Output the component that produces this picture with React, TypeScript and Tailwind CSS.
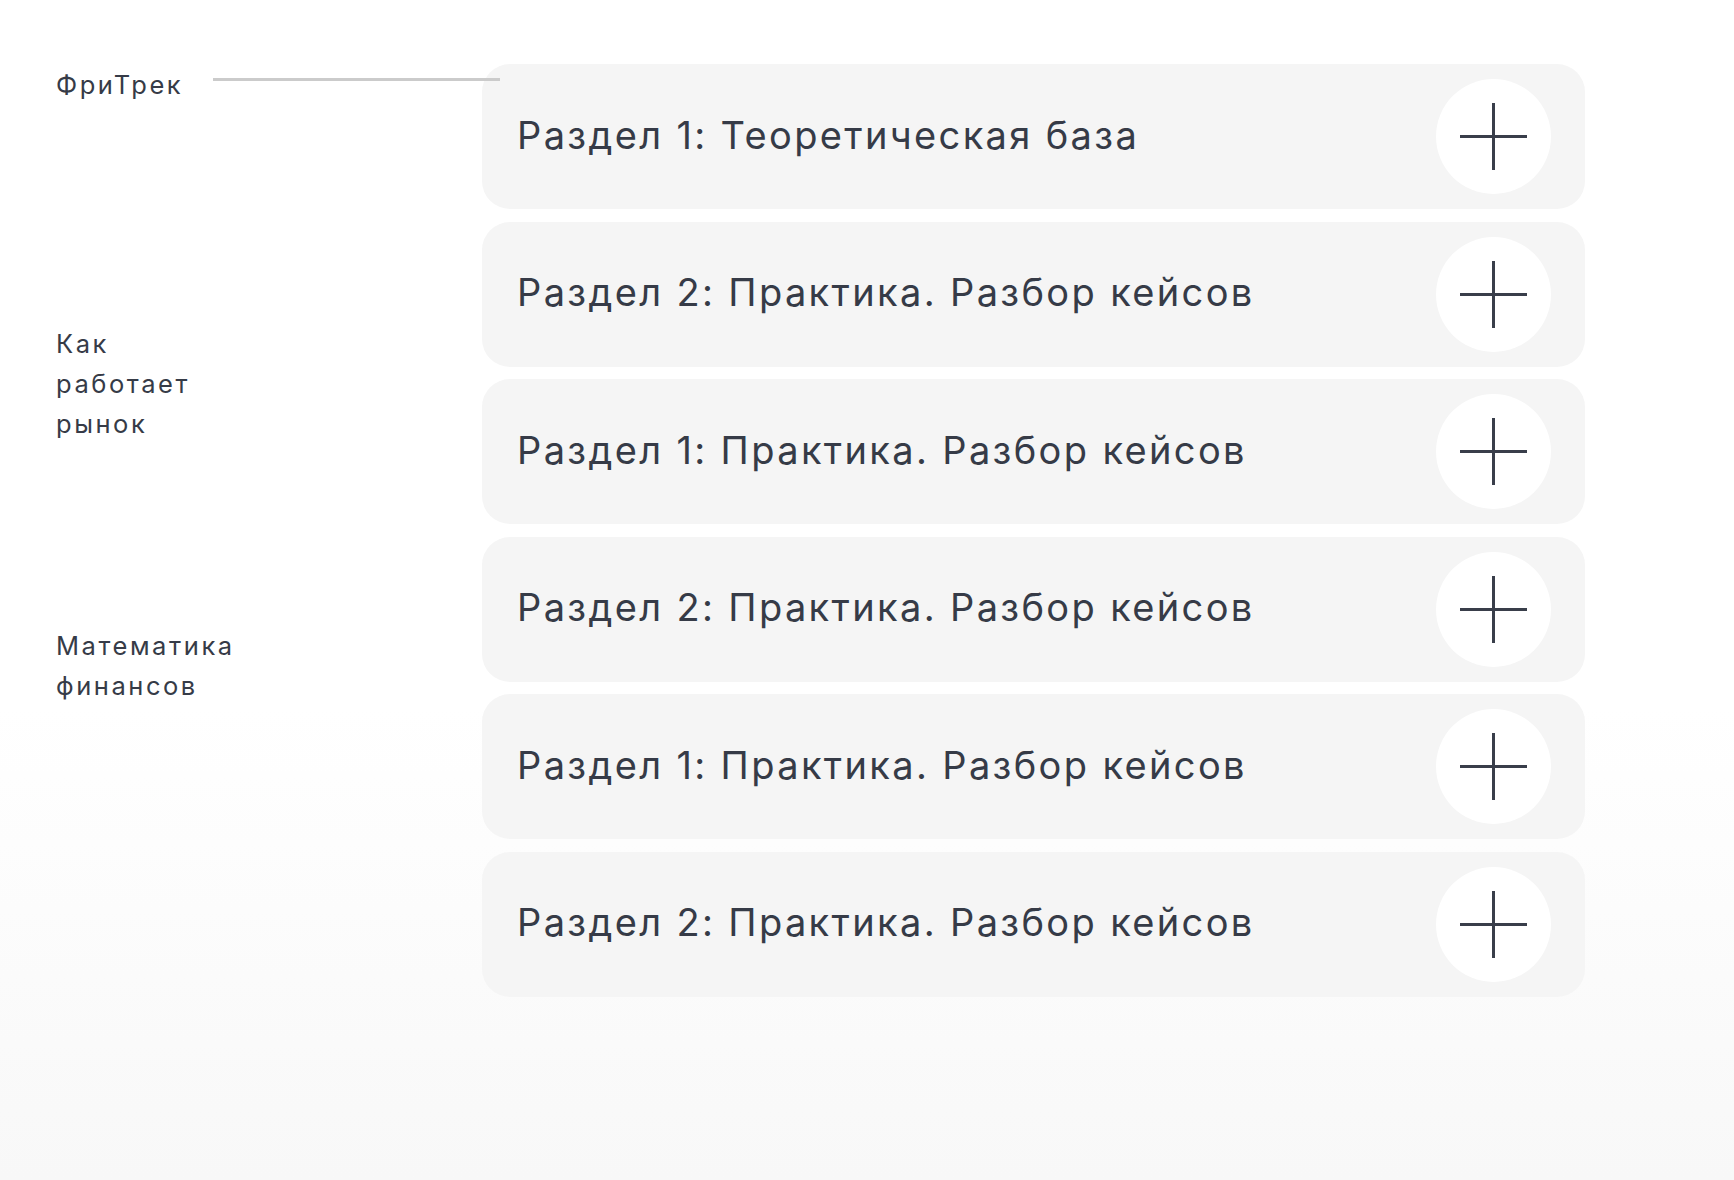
import React from "react";

const items = [
  "Раздел 1: Теоретическая база",
  "Раздел 2: Практика. Разбор кейсов",
  "Раздел 1: Практика. Разбор кейсов",
  "Раздел 2: Практика. Разбор кейсов",
  "Раздел 1: Практика. Разбор кейсов",
  "Раздел 2: Практика. Разбор кейсов",
];

function Plus() {
  return (
    <svg width="67" height="67" viewBox="0 0 67 67" fill="none">
      <path d="M33.5 0V67M0 33.5H67" stroke="#393e4a" strokeWidth="3" />
    </svg>
  );
}

export default function App() {
  return (
    <div
      className="w-full min-h-[1180px] flex bg-gradient-to-b from-white via-white via-60% to-[#f8f8f8] text-[#363b47]"
      style={{ fontFamily: "Inter, 'Noto Sans', sans-serif" }}
    >
      <div className="w-[482px] shrink-0 pl-[56px] pt-[65px] flex flex-col text-[25.5px] leading-[40px] tracking-[0.1em]">
        <div className="flex items-start">
          <span>ФриТрек</span>
          <div className="relative z-10 ml-auto mt-[13px] w-[287px] h-[3px] bg-[#cbcbcb] -mr-[18px]" />
        </div>
        <div className="mt-[219px]">
          Как
          <br />
          работает
          <br />
          рынок
        </div>
        <div className="mt-[182px]">
          Математика
          <br />
          финансов
        </div>
      </div>
      <div className="w-[1103px] pt-[64px] flex flex-col gap-[12.5px]">
        {items.map((t, i) => (
          <div
            key={i}
            className="h-[145px] rounded-[28px] bg-[#f5f5f5] pl-[35px] pr-[34px] flex items-center justify-between"
          >
            <span className="text-[38px] leading-none tracking-[0.062em] mb-[4px]">{t}</span>
            <div className="w-[115px] h-[115px] rounded-full bg-white flex items-center justify-center">
              <Plus />
            </div>
          </div>
        ))}
      </div>
    </div>
  );
}
